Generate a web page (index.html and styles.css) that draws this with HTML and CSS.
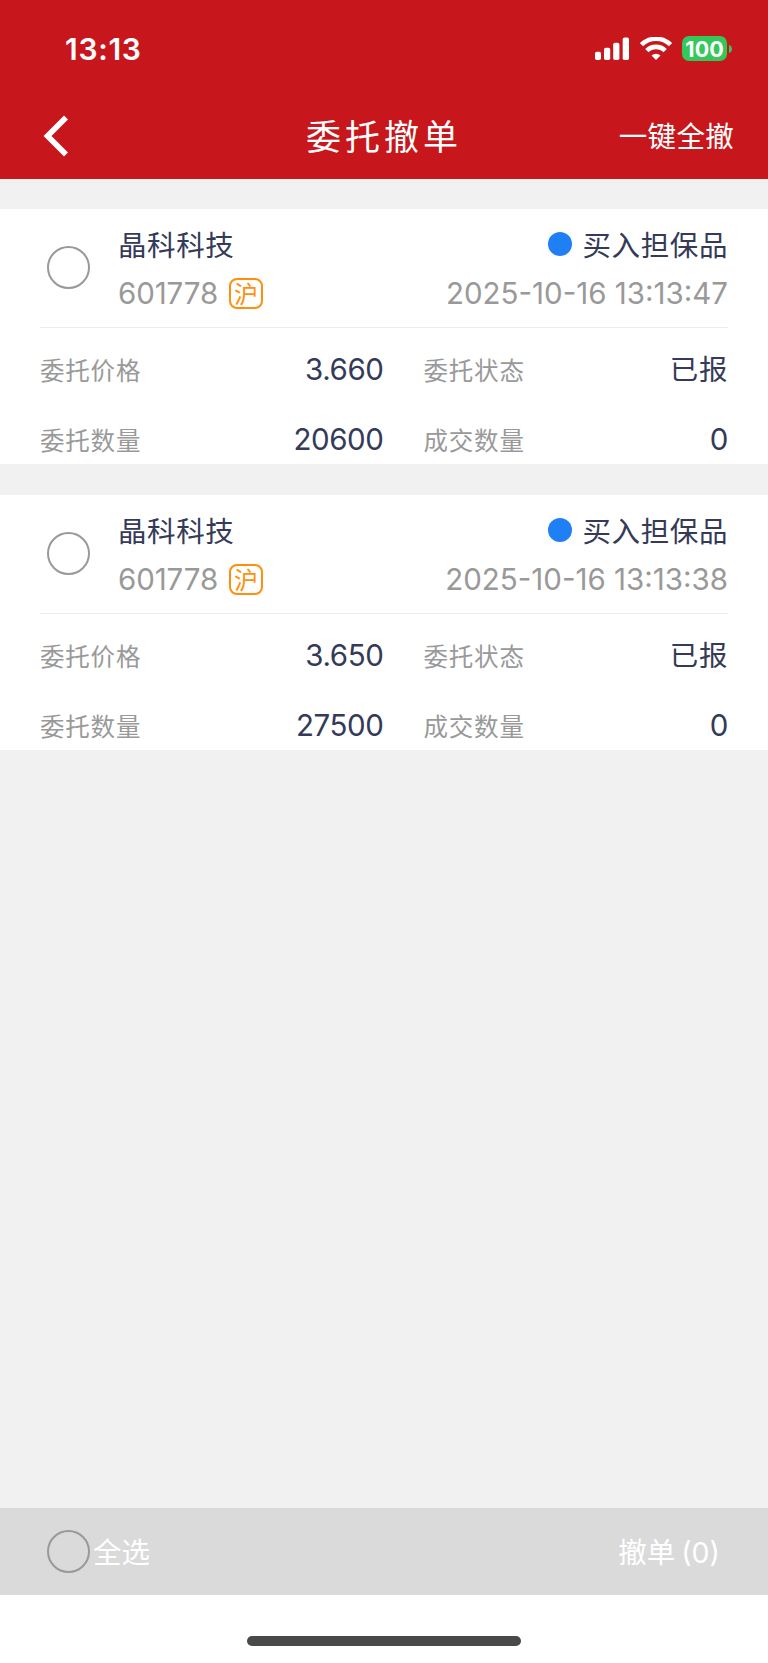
FILE: index.html
```html
<!DOCTYPE html>
<html lang="zh-CN">
<head>
<meta charset="utf-8">
<title>委托撤单</title>
<link rel="stylesheet" href="styles.css">
</head>
<body>
<div class="app">
  <header class="header">
    <div class="status">
      <span class="clock">13:13</span>
      <div class="indicators">
        <svg class="signal" viewBox="0 0 34 23" width="34" height="23" fill="#fff">
          <rect x="0" y="14.7" width="6" height="8.3" rx="1.8"/>
          <rect x="9" y="10.8" width="6.2" height="12.2" rx="1.8"/>
          <rect x="18.2" y="5.7" width="6.2" height="17.3" rx="1.8"/>
          <rect x="27.7" y="0.5" width="6.3" height="22.5" rx="1.8"/>
        </svg>
        <svg class="wifi" viewBox="0 0 32 23" width="32" height="23" fill="none" stroke="#fff" stroke-width="4.6">
          <path d="M1.5 7.7a20.8 20.8 0 0 1 29 0"/>
          <path d="M6.8 13.7a13 13 0 0 1 18.4 0"/>
          <path d="M16 23l-4.5-4.4a6.6 6.6 0 0 1 9 0z" fill="#fff" stroke="none"/>
        </svg>
        <div class="battery"><span class="level">100</span><svg class="cap" viewBox="0 0 3 8" width="3" height="8"><path d="M0 0c4 1 4 7 0 8z" fill="#34c759"/></svg></div>
      </div>
    </div>
    <nav class="nav">
      <svg class="back" viewBox="0 0 26 42" width="26" height="42" fill="none" stroke="#fff" stroke-width="5.6"><path d="M23 2.5L4.5 21 23 39.500"/></svg>
      <h1 class="title">委托撤单</h1>
      <span class="all">一键全撤</span>
    </nav>
  </header>
  <main class="list">
    <section class="card">
      <div class="head">
        <i class="radio"></i>
        <div class="stock">
          <div class="name">晶科科技</div>
          <div class="code"><span class="num">601778</span><span class="market">沪</span></div>
        </div>
        <div class="order">
          <div class="side"><i class="dot"></i><span class="name">买入担保品</span></div>
          <div class="num time">2025-10-16 13:13:47</div>
        </div>
      </div>
      <div class="fields">
        <div class="field"><span class="label">委托价格</span><span class="value">3.660</span></div>
        <div class="field"><span class="label">委托状态</span><span class="value cn">已报</span></div>
        <div class="field"><span class="label">委托数量</span><span class="value">20600</span></div>
        <div class="field"><span class="label">成交数量</span><span class="value">0</span></div>
      </div>
    </section>
    <section class="card">
      <div class="head">
        <i class="radio"></i>
        <div class="stock">
          <div class="name">晶科科技</div>
          <div class="code"><span class="num">601778</span><span class="market">沪</span></div>
        </div>
        <div class="order">
          <div class="side"><i class="dot"></i><span class="name">买入担保品</span></div>
          <div class="num time">2025-10-16 13:13:38</div>
        </div>
      </div>
      <div class="fields">
        <div class="field"><span class="label">委托价格</span><span class="value">3.650</span></div>
        <div class="field"><span class="label">委托状态</span><span class="value cn">已报</span></div>
        <div class="field"><span class="label">委托数量</span><span class="value">27500</span></div>
        <div class="field"><span class="label">成交数量</span><span class="value">0</span></div>
      </div>
    </section>
  </main>
  <footer class="toolbar">
    <i class="radio"></i>
    <span class="select">全选</span>
    <span class="cancel">撤单<span class="count">(0)</span></span>
  </footer>
  <div class="home"><i class="indicator"></i></div>
</div>
</body>
</html>
```

FILE: styles.css
```css
* { box-sizing: border-box; }
body { margin: 0; }
.app {
  display: flex;
  flex-direction: column;
  width: 768px;
  height: 1663px;
  background: #f1f1f1;
  color: #343a58;
  font-family: "Noto Sans CJK SC", sans-serif;
}
.header {
  height: 179px;
  background: #c7171c;
  color: #fff;
}
.status {
  display: flex;
  justify-content: space-between;
  align-items: center;
  height: 97px;
  padding: 0 36px 0 65px;
}
.clock {
  font: 600 30px/40px Inter, sans-serif;
  letter-spacing: 0.7px;
}
.indicators { display: flex; align-items: center; }
.signal { margin-right: -1px; }
.wifi { margin-left: 12px; }
.battery { display: flex; align-items: center; margin-left: 10px; }
.level {
  width: 45px;
  height: 25px;
  border-radius: 7px;
  background: #34c759;
  font: 700 21.5px/26px Inter, sans-serif;
  text-align: center;
}
.cap { margin-left: 2px; }
.nav {
  display: grid;
  grid-template-columns: 1fr auto 1fr;
  align-items: center;
  height: 78px;
  padding: 0 34px 0 43px;
}
.title {
  margin: 0;
  padding: 0 9px 3px 0;
  font-size: 35px;
  font-weight: 400;
  line-height: 50px;
  letter-spacing: 4px;
}
.all { justify-self: end; padding-bottom: 3px; font-size: 28.5px; letter-spacing: 0.3px; }
.list {
  display: flex;
  flex-direction: column;
  gap: 31px;
  flex: 1;
  padding-top: 30px;
}
.card { height: 255px; padding: 0 40px; background: #fff; }
.head {
  display: flex;
  height: 119px;
  padding: 11px 0 0 7px;
  border-bottom: 1.5px solid #ececee;
}
.radio {
  width: 43px;
  height: 43px;
  border: 2px solid #999;
  border-radius: 50%;
}
.head .radio { margin-top: 26px; }
.stock { margin-left: 28px; }
.name {
  font-size: 28.5px;
  line-height: 48px;
  letter-spacing: 0.6px;
}
.code { display: flex; align-items: center; height: 51px; }
.num { color: #999; font: 400 29.5px/51px Inter, sans-serif; letter-spacing: -0.1px; }
.market {
  width: 34px;
  height: 31px;
  margin-left: 11px;
  border: 2px solid #ff8f0c;
  border-radius: 8px;
  color: #ff8f0c;
  font-size: 24px;
  line-height: 25px;
  text-align: center;
}
.order { margin-left: auto; }
.side { display: flex; justify-content: flex-end; align-items: center; height: 48px; }
.dot { width: 24px; height: 24px; margin-right: 10px; border-radius: 50%; background: #1f7ff5; }
.time { text-align: right; letter-spacing: 0; }
.fields {
  display: grid;
  grid-template-columns: 343.5px 304.5px;
  grid-auto-rows: 70px;
  column-gap: 40px;
  padding-top: 6px;
}
.field { display: flex; justify-content: space-between; align-items: center; }
.label { color: #999; font-size: 24.5px; letter-spacing: 0.8px; }
.value { font: 400 29.5px/40px Inter, sans-serif; letter-spacing: -0.4px; }
.cn { padding-bottom: 2px; font: 400 28.5px/40px "Noto Sans CJK SC", sans-serif; letter-spacing: 0.6px; }
.toolbar {
  display: flex;
  align-items: center;
  height: 87px;
  padding: 0 48px 0 47px;
  background: #dadada;
  color: #fff;
  font-size: 28.5px;
}
.select { margin-left: 3px; padding-bottom: 2px; }
.cancel { margin-left: auto; padding-bottom: 2px; }
.count { margin-left: 6px; font-family: Inter, sans-serif; }
.home { display: flex; justify-content: center; height: 68px; padding-top: 41px; background: #fff; }
.indicator { width: 274px; height: 10px; border-radius: 5px; background: #494949; }
```
